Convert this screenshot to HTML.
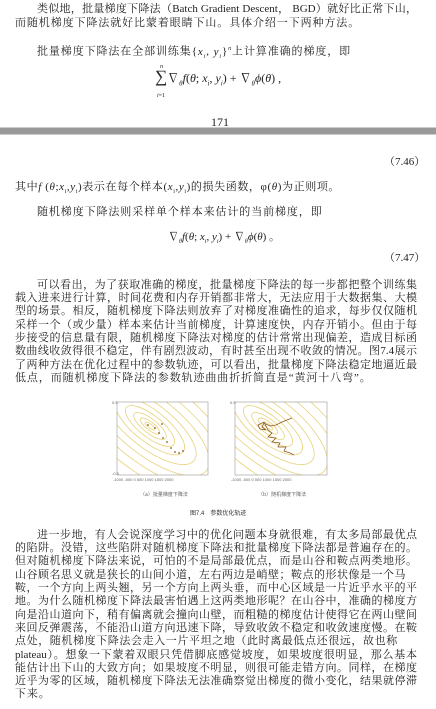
<!DOCTYPE html>
<html><head><meta charset="utf-8"><style>
body{margin:0;background:#fff;width:436px;height:709px;position:relative;overflow:hidden;font-family:"Liberation Serif","Noto Serif CJK SC","Noto Sans CJK SC",serif;color:#222}
.l{position:absolute;font-size:11px;line-height:13px;white-space:nowrap;height:13px}
.j{text-align:justify;text-align-last:justify;width:402px;left:15px}
.i{left:37px;width:380px}
i{font-style:italic}
.band{position:absolute;left:0;top:127px;width:436px;height:8px;background:#999;border-top:1px solid #ccc;border-bottom:1px solid #ccc;box-sizing:border-box}
</style></head><body>
<div class="l j i" style="top:3px">类似地，批量梯度下降法（Batch Gradient Descent， BGD）就好比正常下山，</div>
<div class="l" style="top:17px;left:15px;letter-spacing:0.9px">而随机梯度下降法就好比蒙着眼睛下山。具体介绍一下两种方法。</div>
<div class="l" style="top:43px;left:37px;letter-spacing:0.9px">批量梯度下降法在全部训练集{<i>x<sub style="font-size:6px">i</sub></i>, <i>y<sub style="font-size:6px">i</sub></i>}<sup style="font-size:6px"><i>n</i></sup>上计算准确的梯度，即</div>
<div class="l" style="top:67px;left:155px;font-size:12px;line-height:20px;height:22px"><span style="font-size:17px">∑</span>∇<sub style="font-size:7px"><i>θ</i></sub><i>f</i>(<i>θ</i>; <i>x<sub style="font-size:7px">i</sub></i>, <i>y<sub style="font-size:7px">i</sub></i>) + ∇<sub style="font-size:7px"><i>θ</i></sub><i>ϕ</i>(<i>θ</i>) ,</div>
<div class="l" style="top:61px;left:160px;font-size:6px"><i>n</i></div>
<div class="l" style="top:90px;left:157px;font-size:6px"><i>i</i>=1</div>
<div class="l" style="top:116px;left:211px;font-size:12px">171</div>
<div class="band"></div>
<div class="l" style="top:156px;left:384px;font-size:11px">（7.46）</div>
<div class="l" style="top:181px;left:15px;letter-spacing:0.6px">其中<i>f</i> (<i>θ</i>;<i>x</i><sub style="font-size:6px">i</sub>,<i>y</i><sub style="font-size:6px">i</sub>)表示在每个样本(<i>x</i><sub style="font-size:6px">i</sub>,<i>y</i><sub style="font-size:6px">i</sub>)的损失函数，φ(<i>θ</i>)为正则项。</div>
<div class="l" style="top:206px;left:37px;letter-spacing:0.9px">随机梯度下降法则采样单个样本来估计的当前梯度，即</div>
<div class="l" style="top:231px;left:168px;font-size:11px">∇<sub style="font-size:6px"><i>θ</i></sub><i>f</i>(<i>θ</i>; <i>x<sub style="font-size:6px">i</sub></i>, <i>y<sub style="font-size:6px">i</sub></i>) + ∇<sub style="font-size:6px"><i>θ</i></sub><i>ϕ</i>(<i>θ</i>) 。</div>
<div class="l" style="top:252px;left:384px;font-size:11px">（7.47）</div>

<div class="l j i" style="top:279px">可以看出，为了获取准确的梯度，批量梯度下降法的每一步都把整个训练集</div>
<div class="l j" style="top:292px">载入进来进行计算，时间花费和内存开销都非常大，无法应用于大数据集、大模</div>
<div class="l j" style="top:305px">型的场景。相反，随机梯度下降法则放弃了对梯度准确性的追求，每步仅仅随机</div>
<div class="l j" style="top:319px">采样一个（或少量）样本来估计当前梯度，计算速度快，内存开销小。但由于每</div>
<div class="l j" style="top:332px">步接受的信息量有限，随机梯度下降法对梯度的估计常常出现偏差，造成目标函</div>
<div class="l j" style="top:345px">数曲线收敛得很不稳定，伴有剧烈波动，有时甚至出现不收敛的情况。图7.4展示</div>
<div class="l j" style="top:359px">了两种方法在优化过程中的参数轨迹，可以看出，批量梯度下降法稳定地逼近最</div>
<div class="l" style="top:372px;left:15px;letter-spacing:0.9px">低点，而随机梯度下降法的参数轨迹曲曲折折简直是“黄河十八弯”。</div>

<svg style="position:absolute;left:0;top:395px" width="436" height="125" font-family="Liberation Sans" font-size="4" fill="#666">
<defs><clipPath id="c1"><rect x="117" y="7" width="91" height="73"/></clipPath><clipPath id="c2"><rect x="235" y="7" width="92" height="73"/></clipPath></defs>
<g clip-path="url(#c1)" fill="none" stroke="#e8d27a" stroke-width="0.8">
<g transform="translate(150,31) rotate(38)"><ellipse rx="6" ry="2"/><ellipse rx="12" ry="4"/><ellipse rx="20" ry="7"/><ellipse rx="30" ry="11"/><ellipse rx="42" ry="16"/><ellipse rx="56" ry="22"/><ellipse rx="72" ry="29"/><ellipse rx="90" ry="37"/><ellipse rx="110" ry="46"/></g></g>
<rect x="117" y="7" width="91" height="73" fill="none" stroke="#999" stroke-width="0.6"/>
<g fill="#8a5a20"><circle cx="148" cy="30" r="0.9"/><circle cx="155" cy="33" r="0.9"/><circle cx="159" cy="38" r="0.9"/><circle cx="163" cy="43" r="0.9"/><circle cx="167" cy="47" r="0.9"/><circle cx="171" cy="53" r="0.9"/><circle cx="175" cy="57" r="0.9"/><circle cx="179" cy="58" r="0.9"/><circle cx="183" cy="56" r="0.9"/><circle cx="162" cy="29" r="0.9"/></g>
<g clip-path="url(#c2)" fill="none" stroke="#e8d27a" stroke-width="0.8">
<g transform="translate(268,31) rotate(38)"><ellipse rx="6" ry="2"/><ellipse rx="12" ry="4"/><ellipse rx="20" ry="7"/><ellipse rx="30" ry="11"/><ellipse rx="42" ry="16"/><ellipse rx="56" ry="22"/><ellipse rx="72" ry="29"/><ellipse rx="90" ry="37"/><ellipse rx="110" ry="46"/></g></g>
<rect x="235" y="7" width="92" height="73" fill="none" stroke="#999" stroke-width="0.6"/>
<path d="M292 23 L282 27 L276 30 L270 31 L264 28 L262 32 L266 35 L260 34 L258 30 L264 27 L268 35 L272 38 L268 42 L276 43 L272 47 L280 48 L278 52 L286 52 L284 56 L290 58 L294 60" fill="none" stroke="#8a5a20" stroke-width="0.8"/>
<text x="112" y="9">0.5</text><text x="112" y="80">-0.5</text><text x="230" y="9">0.5</text>
<text x="113" y="86">-1000 -500   0   500  1000 1500 2000</text>
<text x="231" y="86">-1000 -500   0   500  1000 1500 2000</text>
<text x="140" y="101" font-size="5" font-family="Noto Sans CJK SC">（a）批量梯度下降法</text>
<text x="258" y="101" font-size="5" font-family="Noto Sans CJK SC">（b）随机梯度下降法</text>
<text x="190" y="120" font-size="6" fill="#333" font-family="Noto Sans CJK SC">图7.4　参数优化轨迹</text>
</svg>

<div class="l j i" style="top:529px">进一步地，有人会说深度学习中的优化问题本身就很难，有太多局部最优点</div>
<div class="l j" style="top:542px">的陷阱。没错，这些陷阱对随机梯度下降法和批量梯度下降法都是普遍存在的。</div>
<div class="l j" style="top:555px">但对随机梯度下降法来说，可怕的不是局部最优点，而是山谷和鞍点两类地形。</div>
<div class="l" style="top:569px;left:15px;letter-spacing:0.5px">山谷顾名思义就是狭长的山间小道，左右两边是峭壁；鞍点的形状像是一个马</div>
<div class="l j" style="top:582px">鞍，一个方向上两头翘，另一个方向上两头垂，而中心区域是一片近乎水平的平</div>
<div class="l j" style="top:595px">地。为什么随机梯度下降法最害怕遇上这两类地形呢？在山谷中，准确的梯度方</div>
<div class="l j" style="top:609px">向是沿山道向下，稍有偏离就会撞向山壁，而粗糙的梯度估计使得它在两山壁间</div>
<div class="l j" style="top:622px">来回反弹震荡，不能沿山道方向迅速下降，导致收敛不稳定和收敛速度慢。在鞍</div>
<div class="l" style="top:635px;left:15px;letter-spacing:0.6px">点处，随机梯度下降法会走入一片平坦之地（此时离最低点还很远，故也称</div>
<div class="l j" style="top:649px">plateau）。想象一下蒙着双眼只凭借脚底感觉坡度，如果坡度很明显，那么基本</div>
<div class="l j" style="top:662px">能估计出下山的大致方向；如果坡度不明显，则很可能走错方向。同样，在梯度</div>
<div class="l j" style="top:675px">近乎为零的区域，随机梯度下降法无法准确察觉出梯度的微小变化，结果就停滞</div>
<div class="l" style="top:688px;left:15px;letter-spacing:0.9px">下来。</div>
</body></html>
